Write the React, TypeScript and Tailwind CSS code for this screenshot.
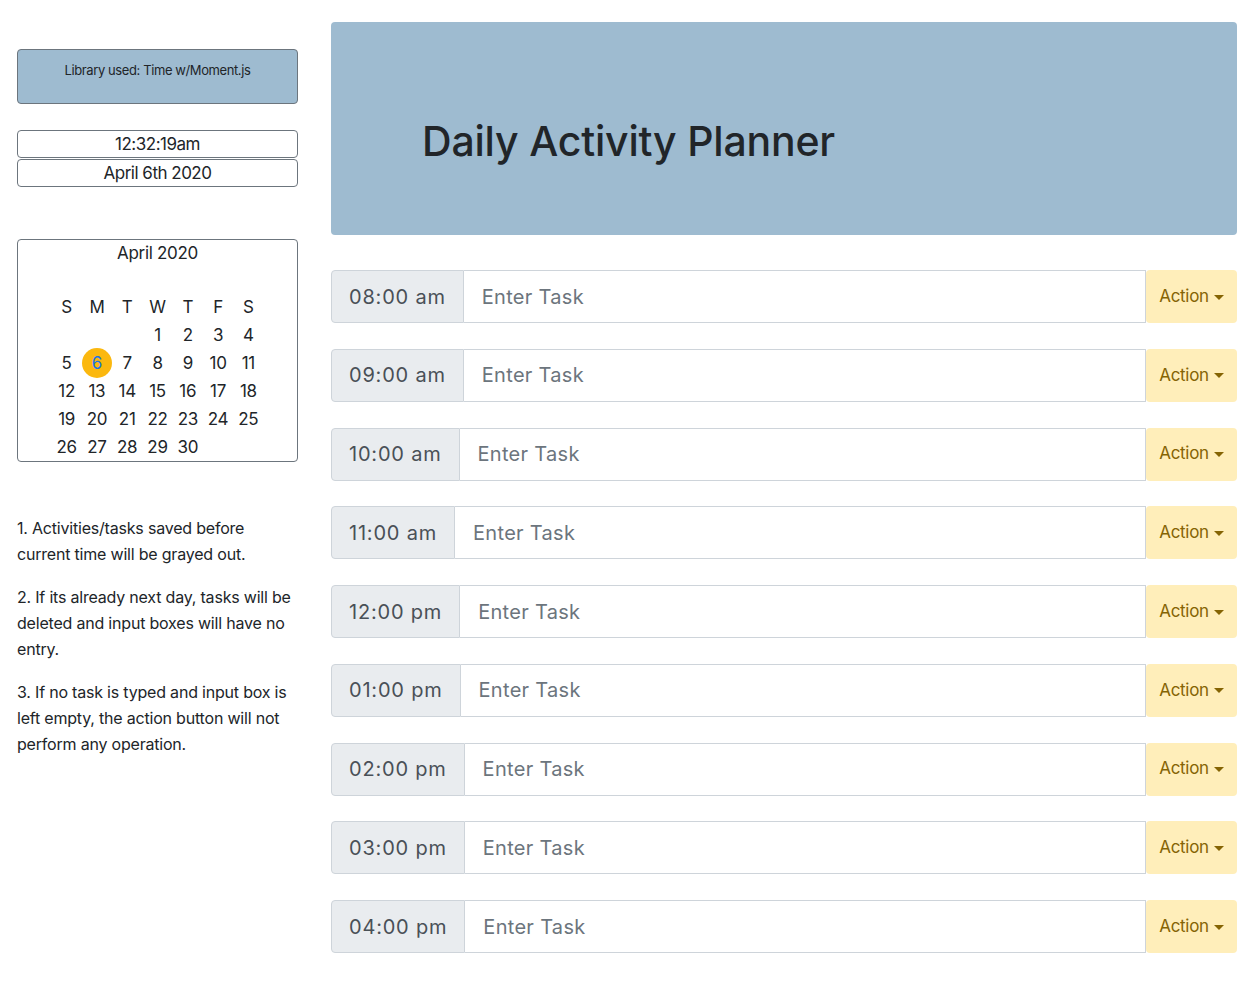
const hours = [
  "08:00 am",
  "09:00 am",
  "10:00 am",
  "11:00 am",
  "12:00 pm",
  "01:00 pm",
  "02:00 pm",
  "03:00 pm",
  "04:00 pm",
];

const weeks: (number | null)[][] = [
  [null, null, null, 1, 2, 3, 4],
  [5, 6, 7, 8, 9, 10, 11],
  [12, 13, 14, 15, 16, 17, 18],
  [19, 20, 21, 22, 23, 24, 25],
  [26, 27, 28, 29, 30, null, null],
];

const notes = [
  "1. Activities/tasks saved before current time will be grayed out.",
  "2. If its already next day, tasks will be deleted and input boxes will have no entry.",
  "3. If no task is typed and input box is left empty, the action button will not perform any operation.",
];

function Calendar() {
  return (
    <div className="mt-[52px] h-[223px] rounded border border-[#6c757d] text-[17px] tracking-[-0.3px] text-[#212529]">
      <div className="pt-px text-center leading-6">April 2020</div>
      <div className="mx-auto mt-[28px] grid w-[212px] grid-cols-7 text-center leading-7">
        {["S", "M", "T", "W", "T", "F", "S"].map((d, i) => (
          <div key={i} className="h-7">
            {d}
          </div>
        ))}
        {weeks.flat().map((d, i) => (
          <div key={i} className="flex h-7 items-center justify-center">
            {d === 6 ? (
              <span className="flex h-[30px] w-[30px] shrink-0 items-center justify-center rounded-full bg-[#fbb80f] text-[#1a73e8]">
                6
              </span>
            ) : (
              d
            )}
          </div>
        ))}
      </div>
    </div>
  );
}

export default function App() {
  return (
    <div className="flex gap-[33px] bg-white pt-[22px] pr-[16px] pb-8 pl-[17px] font-['Inter',sans-serif] text-[#212529]">
      <aside className="w-[281px] shrink-0 pt-[27px]">
        <div className="h-[55px] rounded border border-[#6c757d] bg-[#9ebbd0] pt-[10px] text-center text-[13px] leading-5 tracking-[-0.4px]">
          Library used: Time w/Moment.js
        </div>
        <div className="mt-[26px] rounded border border-[#6c757d] text-center text-[17px] leading-[26px] tracking-[-0.5px]">
          12:32:19am
        </div>
        <div className="mt-px rounded border border-[#6c757d] text-center text-[17px] leading-[26px] tracking-[-0.5px]">
          April 6th 2020
        </div>
        <Calendar />
        <div className="mt-[53px] text-[16px] leading-[26px] tracking-[-0.2px]">
          {notes.map((n) => (
            <p key={n} className="mb-[17px]">
              {n}
            </p>
          ))}
        </div>
      </aside>

      <main className="min-w-0 flex-1">
        <div className="flex h-[213px] items-center rounded bg-[#9ebbd0] pt-[26px] pl-[91px]">
          <h1 className="text-[41px] font-medium tracking-[-0.2px] text-[#212529]">Daily Activity Planner</h1>
        </div>

        <div className="mt-[35px] flex flex-col gap-[25.75px]">
          {hours.map((h) => (
            <div key={h} className="flex h-[53px]">
              <div className="flex items-center rounded-l border border-[#ced4da] bg-[#e9ecef] px-[17px] text-[20px] tracking-[0.8px] text-[#495057]">
                {h}
              </div>
              <div className="flex flex-1 items-center border border-l-0 border-[#ced4da] bg-white px-[18px] text-[20px] tracking-[0.3px] text-[#6c757d]">
                Enter Task
              </div>
              <button className="flex w-[91px] items-center justify-center gap-[5px] rounded bg-[#ffeeba] text-[17px] tracking-[-0.3px] text-[#856404]">
                Action
                <span className="mt-px h-0 w-0 border-x-[5px] border-t-[5px] border-x-transparent border-t-[#856404]" />
              </button>
            </div>
          ))}
        </div>
      </main>
    </div>
  );
}
